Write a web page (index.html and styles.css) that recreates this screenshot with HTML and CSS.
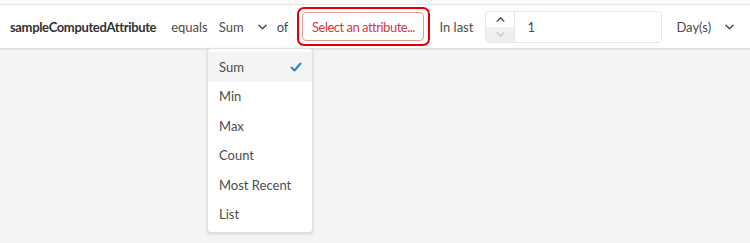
FILE: index.html
```html
<!DOCTYPE html>
<html lang="en">
<head>
  <meta charset="UTF-8" />
  <title>Computed attribute rule</title>
  <link rel="stylesheet" href="styles.css">
</head>
<body>
  <div class="top">
    <div class="toolbar">
      <span class="attr-name">sampleComputedAttribute</span>
      <span class="word equals">equals</span>
      <button type="button" class="picker">
        <span>Sum</span>
        <svg class="chevron" viewBox="0 0 10 6" width="9" height="6"><path d="M1 1l4 4 4-4" /></svg>
      </button>
      <span class="word of">of</span>
      <div class="focus-ring">
        <button type="button" class="attr-btn">Select an attribute...</button>
      </div>
      <span class="word in-last">In last</span>
      <div class="number-field">
        <div class="stepper">
          <span class="step up"><svg viewBox="0 0 10 6" width="9" height="5"><path d="M1 5l4-4 4 4" /></svg></span>
          <span class="step down"><svg viewBox="0 0 10 6" width="9" height="5"><path d="M1 1l4 4 4-4" /></svg></span>
        </div>
        <input type="text" class="number-input" value="1" />
      </div>
      <button type="button" class="picker unit">
        <span>Day(s)</span>
        <svg class="chevron" viewBox="0 0 10 6" width="9" height="6"><path d="M1 1l4 4 4-4" /></svg>
      </button>
    </div>
  </div>

  <ul class="menu">
    <li class="menu-item selected">Sum
      <svg class="check" viewBox="0 0 12 10" width="12" height="10"><path d="M1.5 5.5l3 3 6-7" /></svg>
    </li>
    <li class="menu-item">Min</li>
    <li class="menu-item">Max</li>
    <li class="menu-item">Count</li>
    <li class="menu-item">Most Recent</li>
    <li class="menu-item">List</li>
  </ul>
</body>
</html>
```

FILE: styles.css
```css
body {
  margin: 0;
  background-color: #f4f4f4;
  color: #4b4b4b;
  font-family: Lato, "Open Sans", sans-serif;
  font-size: 13px;
}
.top {
  background-color: #fafafa;
  padding-top: 4px;
}
.toolbar {
  display: flex;
  align-items: center;
  height: 43px;
  padding-left: 10px;
  background-color: #fff;
  border-top: 1px solid #e4e4e4;
  border-bottom: 2px solid #e1e1e1;
  white-space: nowrap;
}
.toolbar > * {
  flex-shrink: 0;
}
.attr-name {
  font-weight: bold;
  color: #323232;
  letter-spacing: -0.35px;
  margin-right: 15px;
}
.word {
  margin-right: 11px;
}
.word.of {
  margin-right: 9px;
}
.word.in-last {
  margin-left: 1px;
  margin-right: 12px;
}
.picker {
  display: flex;
  align-items: center;
  gap: 14px;
  border: none;
  background: none;
  padding: 0;
  margin-right: 10px;
  font: inherit;
  color: #4b4b4b;
}
.chevron path, .step path {
  fill: none;
  stroke: #4b4b4b;
  stroke-width: 1.6;
  stroke-linecap: round;
  stroke-linejoin: round;
}
.focus-ring {
  border: 2px solid #e30000;
  border-radius: 7px;
  padding: 3px 4px 3px 3px;
  margin-right: 8px;
}
.attr-btn {
  display: block;
  box-sizing: border-box;
  width: 122px;
  height: 29px;
  padding: 0;
  border: 1px solid #e39a9a;
  border-radius: 4px;
  background-color: #fff;
  color: #d7373f;
  font: inherit;
  letter-spacing: -0.5px;
}
.number-field {
  display: flex;
  height: 30px;
  margin-right: 14px;
  border: 1px solid #e6e6e6;
  border-radius: 4px;
  overflow: hidden;
}
.stepper {
  display: flex;
  flex-direction: column;
  width: 28px;
  border-right: 1px solid #e6e6e6;
}
.step {
  flex: 1;
  display: flex;
  align-items: center;
  justify-content: center;
}
.step.down {
  background-color: #efefef;
}
.step.down path {
  stroke: #c8c8c8;
}
.number-input {
  width: 134px;
  border: none;
  padding: 0 0 0 12px;
  font: inherit;
  color: #4b4b4b;
  outline: none;
}
.menu {
  position: absolute;
  left: 207px;
  top: 48px;
  width: 104px;
  margin: 0;
  padding: 3px 0;
  list-style: none;
  background-color: #fff;
  border: 1px solid #e1e1e1;
  border-radius: 4px;
  box-shadow: 0 1px 3px rgba(0, 0, 0, 0.15);
}
.menu-item {
  display: flex;
  align-items: center;
  justify-content: space-between;
  height: 29.5px;
  padding: 0 10px 0 11px;
}
.menu-item.selected {
  background-color: #f4f4f4;
}
.check path {
  fill: none;
  stroke: #2680eb;
  stroke-width: 2;
  stroke-linecap: round;
  stroke-linejoin: round;
}
```
